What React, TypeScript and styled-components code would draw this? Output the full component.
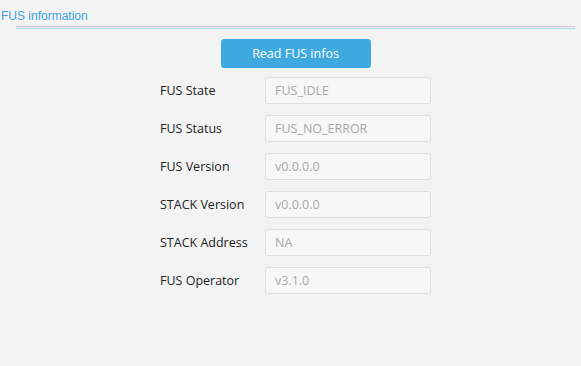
import React from 'react';
import styled, { createGlobalStyle } from 'styled-components';

const GlobalStyle = createGlobalStyle`
  html, body {
    margin: 0;
    padding: 0;
    background: #f3f3f3;
  }
  body {
    font-family: 'Open Sans', 'Noto Sans', sans-serif;
  }
`;

const Page = styled.div`
  width: 581px;
  height: 366px;
  background: #f3f3f3;
  box-sizing: border-box;
`;

const Title = styled.div`
  font-family: 'Liberation Sans', Arial, sans-serif;
  font-size: 12px;
  color: #3ea3dc;
  padding: 9px 0 0 1px;
  line-height: 14px;
  height: 17px;
`;

const Rule = styled.div`
  margin: 0 6px 0 16px;
  height: 3px;
  border-top: 1px solid #c9c9c9;
  border-bottom: 1px solid #a8dbeb;
  box-sizing: border-box;
`;

const Body = styled.div`
  padding: 10px 0 0 10px;
  display: flex;
  justify-content: center;
`;

const Form = styled.div`
  width: 271px;
  display: flex;
  flex-direction: column;
  align-items: center;
  gap: 11px;
`;

const Button = styled.button`
  width: 150px;
  height: 29px;
  margin-bottom: -2px;
  border: none;
  border-radius: 3px;
  background: #3ea9de;
  color: #fff;
  font-family: 'Open Sans', 'Noto Sans', sans-serif;
  font-size: 12.5px;
  cursor: pointer;
  padding: 0;
`;

const Row = styled.div`
  width: 100%;
  display: flex;
  align-items: center;
  height: 27px;
`;

const Label = styled.label`
  width: 105px;
  font-size: 12.5px;
  color: #222;
`;

const Field = styled.input`
  width: 166px;
  height: 27px;
  box-sizing: border-box;
  background: #f7f7f7;
  border: 1px solid #dedede;
  border-radius: 3px;
  padding: 0 9px;
  font-family: 'Open Sans', 'Noto Sans', sans-serif;
  font-size: 12.5px;
  color: #a8a8a8;
  outline: none;
`;

const rows = [
  ['FUS State', 'FUS_IDLE'],
  ['FUS Status', 'FUS_NO_ERROR'],
  ['FUS Version', 'v0.0.0.0'],
  ['STACK Version', 'v0.0.0.0'],
  ['STACK Address', 'NA'],
  ['FUS Operator', 'v3.1.0'],
];

const App: React.FC = () => {
  return (
    <Page>
      <GlobalStyle />
      <Title>FUS information</Title>
      <Rule />
      <Body>
        <Form>
          <Button>Read FUS infos</Button>
          {rows.map(([label, value]) => (
            <Row key={label}>
              <Label>{label}</Label>
              <Field readOnly value={value} />
            </Row>
          ))}
        </Form>
      </Body>
    </Page>
  );
};

export default App;
